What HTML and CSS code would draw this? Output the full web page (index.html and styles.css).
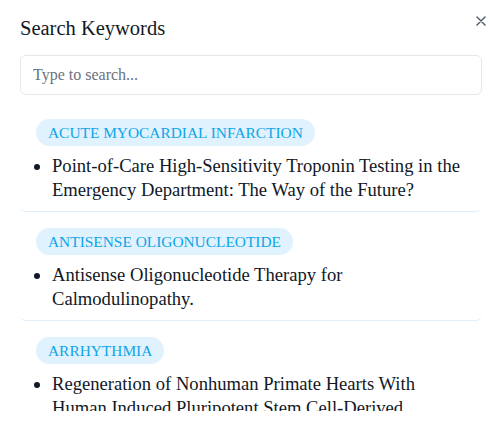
FILE: index.html
```html
<!DOCTYPE html>
<html lang="en">
<head>
  <meta charset="UTF-8">
  <meta name="viewport" content="width=device-width, initial-scale=1.0">
  <title>Search Keywords</title>
  <link rel="stylesheet" href="styles.css">
</head>
<body>

  <div class="modal">
    <div class="modal-header">
      <h2>Search Keywords</h2>
      <button class="close" aria-label="Close">
        <svg width="10" height="10" viewBox="0 0 10 10">
          <path d="M1 1L9 9M9 1L1 9" stroke="#4b5563" stroke-width="1.4" stroke-linecap="round"/>
        </svg>
      </button>
    </div>

    <input class="search" type="text" placeholder="Type to search...">

    <div class="results">
      <div class="item">
        <span class="tag">ACUTE MYOCARDIAL INFARCTION</span>
        <ul>
          <li>Point-of-Care High-Sensitivity Troponin Testing in the Emergency Department: The Way of the Future?</li>
        </ul>
      </div>
      <div class="item">
        <span class="tag">ANTISENSE OLIGONUCLEOTIDE</span>
        <ul>
          <li>Antisense Oligonucleotide Therapy for Calmodulinopathy.</li>
        </ul>
      </div>
      <div class="item">
        <span class="tag">ARRHYTHMIA</span>
        <ul>
          <li>Regeneration of Nonhuman Primate Hearts With Human Induced Pluripotent Stem Cell-Derived Cardiomyocytes.</li>
        </ul>
      </div>
    </div>
  </div>

</body>
</html>
```

FILE: styles.css
```css
body {
  font-family: 'Liberation Serif', serif;
  background-color: white;
  color: #111827;
  margin: 0;
}

.modal {
  padding: 14px 20px 0 20px;
}

.modal-header {
  display: flex;
  justify-content: space-between;
  align-items: flex-start;
}

h2 {
  margin: 0;
  font-size: 20.5px;
  font-weight: normal;
  line-height: 28px;
}

.close {
  background: none;
  border: none;
  padding: 0;
  margin-top: 2px;
  margin-right: -4px;
  width: 10px;
  height: 10px;
  display: flex;
  cursor: pointer;
}

.search {
  display: block;
  box-sizing: border-box;
  width: 100%;
  height: 40px;
  margin-top: 13px;
  padding: 0 12px;
  border: 1px solid #e5e7eb;
  border-radius: 6px;
  font-family: inherit;
  font-size: 16px;
  color: #111827;
}

.search::placeholder {
  color: #6b7280;
}

.results {
  margin-top: 8px;
  height: 308px;
  overflow: hidden;
}

.item {
  padding: 16px 16px 9px 16px;
  border-bottom: 1px solid #e0f0fb;
  border-radius: 6px;
}

.tag {
  display: inline-block;
  height: 27px;
  line-height: 27px;
  padding: 0 12px;
  border-radius: 14px;
  background-color: #e0f2fe;
  color: #0ea5e9;
  font-size: 15.4px;
}

ul {
  margin: 8px 0 0 0;
  padding-left: 16px;
}

li {
  font-size: 18.6px;
  line-height: 24px;
}
```
